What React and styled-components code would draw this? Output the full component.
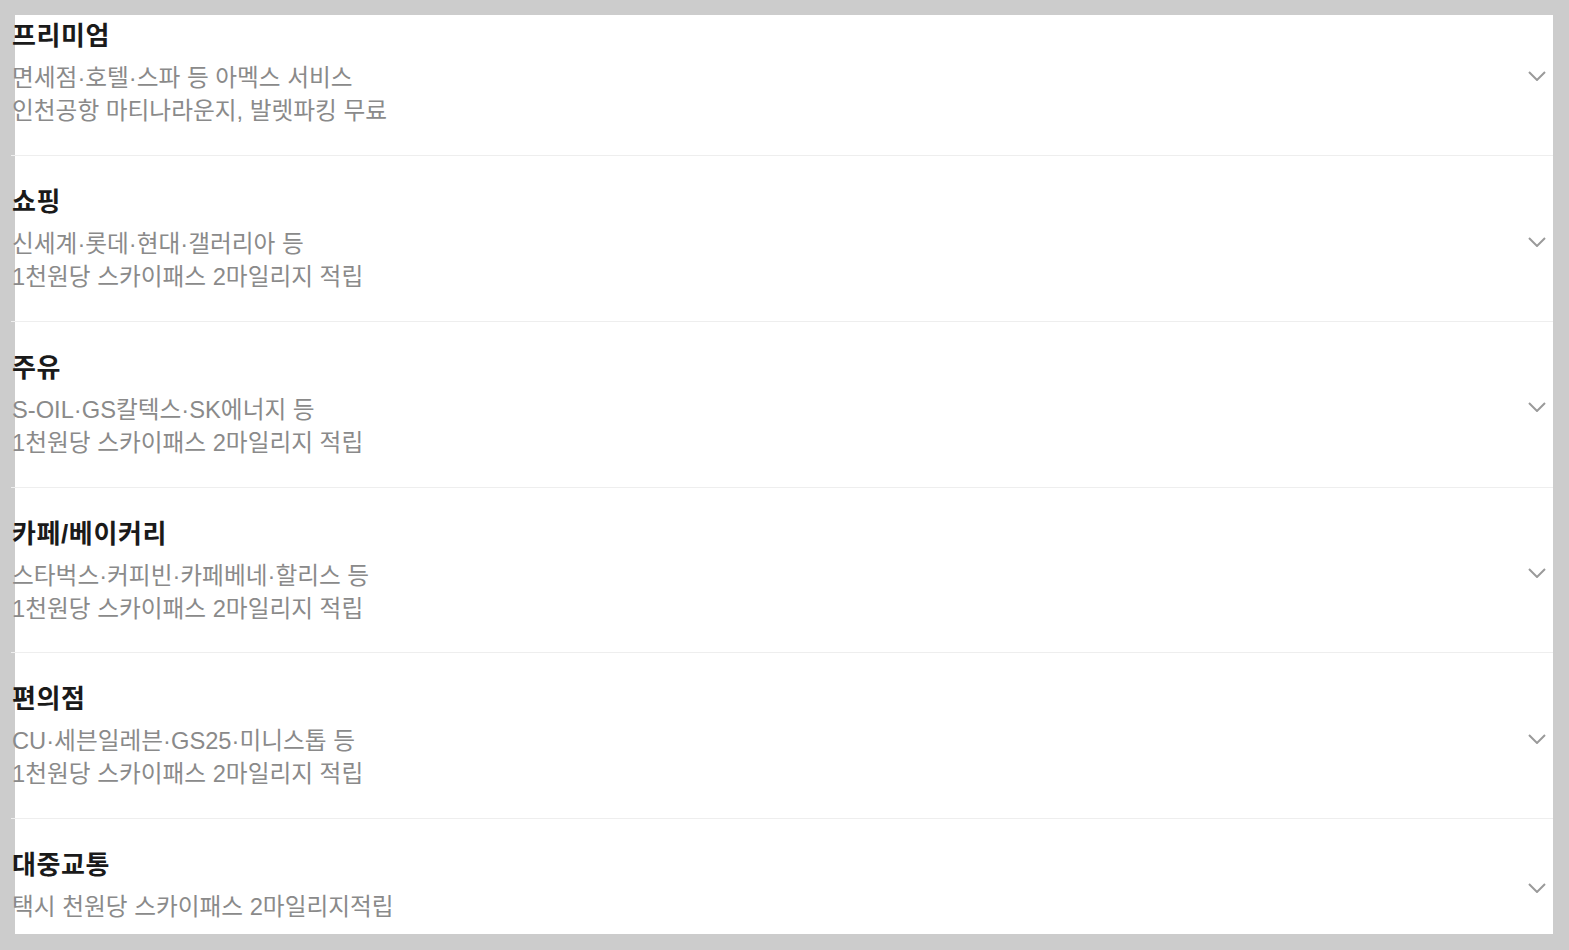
import styled, { createGlobalStyle } from 'styled-components'

const GlobalStyle = createGlobalStyle`
  html, body {
    margin: 0;
    padding: 0;
    background-color: #cccccc;
  }
  body {
    font-family: "Liberation Sans", Arial, "Noto Sans CJK KR", sans-serif;
  }
`;

const benefits = [
  {
    title: '프리미엄',
    lines: ['면세점·호텔·스파 등 아멕스 서비스', '인천공항 마티나라운지, 발렛파킹 무료'],
  },
  {
    title: '쇼핑',
    lines: ['신세계·롯데·현대·갤러리아 등', '1천원당 스카이패스 2마일리지 적립'],
  },
  {
    title: '주유',
    lines: ['S-OIL·GS칼텍스·SK에너지 등', '1천원당 스카이패스 2마일리지 적립'],
  },
  {
    title: '카페/베이커리',
    lines: ['스타벅스·커피빈·카페베네·할리스 등', '1천원당 스카이패스 2마일리지 적립'],
  },
  {
    title: '편의점',
    lines: ['CU·세븐일레븐·GS25·미니스톱 등', '1천원당 스카이패스 2마일리지 적립'],
  },
  {
    title: '대중교통',
    lines: ['택시 천원당 스카이패스 2마일리지적립'],
  },
];

const Chevron = () => (
  <ChevronIcon width="18" height="10" viewBox="0 0 18 10" aria-hidden="true">
    <polyline points="1,1 9,9 17,1" fill="none" stroke="#9a9a9a" strokeWidth="2" />
  </ChevronIcon>
);

const App = () => {
  return (
    <>
      <GlobalStyle />
      <Panel>
        <List>
          {benefits.map((item) => (
            <Item key={item.title}>
              <Body>
                <Title>{item.title}</Title>
                <Desc>
                  {item.lines.map((line) => (
                    <span key={line}>{line}</span>
                  ))}
                </Desc>
              </Body>
              <Chevron />
            </Item>
          ))}
        </List>
      </Panel>
    </>
  )
}

const Panel = styled.div`
  margin: 15px 16px 0 15px;
  height: 919px;
  background-color: #ffffff;
`;

const List = styled.ul`
  list-style: none;
  margin: 0 0 0 -4px;
  padding: 0;
`;

const Item = styled.li`
  display: flex;
  align-items: center;
  padding: 29px 7px 26.8px 1px;
  border-bottom: 1px solid #eeeeee;

  &:first-child {
    padding-top: 4.3px;
  }

  &:last-child {
    border-bottom: none;
  }
`;

const Body = styled.div`
  flex: 1;
  min-width: 0;
`;

const Title = styled.h3`
  margin: 0 0 9px 0;
  font-size: 26px;
  line-height: 34px;
  letter-spacing: 0.6px;
  font-weight: 700;
  color: #1a1a1a;
`;

const Desc = styled.p`
  margin: 0;
  font-size: 23.7px;
  line-height: 33px;
  color: #8a8a8a;

  span {
    display: block;
  }
`;

const ChevronIcon = styled.svg`
  flex: none;
  margin-top: 4px;
`;

export default App;
